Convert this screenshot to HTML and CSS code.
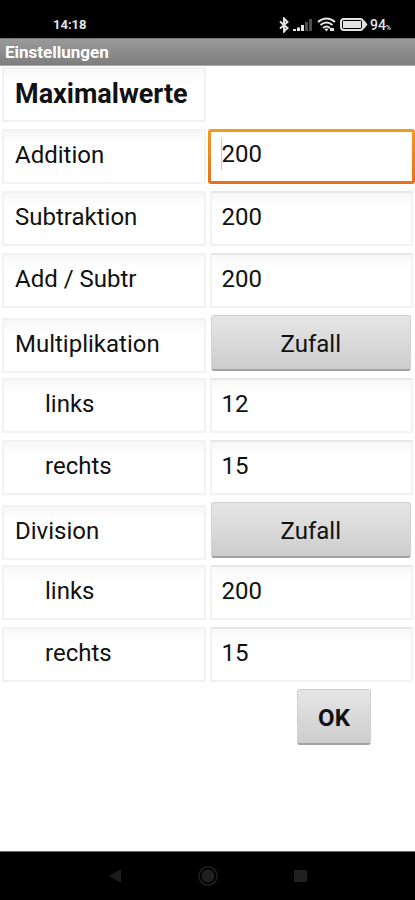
FILE: index.html
```html
<!DOCTYPE html>
<html lang="de">
<head>
  <meta charset="UTF-8" />
  <meta name="viewport" content="width=device-width, initial-scale=1.0" />
  <title>Einstellungen</title>
  <link rel="stylesheet" href="styles.css">
</head>
<body>

  <!-- Status bar -->
  <div class="status-bar">
    <span class="clock">14:18</span>
    <div class="status-icons">
      <svg width="10" height="16" viewBox="0 0 10 16" fill="none" stroke="#e4e4e4" stroke-width="2">
        <path d="M1 4.5 L8.5 11 L5 14.5 V1.5 L8.5 5 L1 11.5" />
      </svg>
      <svg width="20" height="12" viewBox="0 0 20 12">
        <path fill="#e4e4e4" d="M0 10h3v2H0zM4 8.5h3V12H4zM8 6h3v6H8z" />
        <path fill="#4c4c4c" d="M12 3h3v9h-3zM16 0h3v12h-3z" />
      </svg>
      <svg width="19" height="15" viewBox="0 0 19 15" fill="none" stroke="#e4e4e4" stroke-width="2">
        <path d="M1 5 Q9.5 -2 18 5M3.5 8 Q9.5 3 15.5 8M6 11 Q9.5 8 13 11" />
        <path fill="#e4e4e4" stroke="none" d="M7.5 12 Q9.5 11 11.5 12 L9.5 14.5zM13 11h4v3h-4z" />
      </svg>
      <svg width="28" height="14" viewBox="0 0 28 14">
        <rect x="1" y="1" width="22" height="11" rx="3" fill="none" stroke="#e4e4e4" stroke-width="2" />
        <rect x="3" y="3" width="18" height="7" fill="#e4e4e4" />
        <path fill="#e4e4e4" d="M24 2 L27.5 6.5 L24 11z" />
      </svg>
      <span class="battery">94<small>%</small></span>
    </div>
  </div>

  <h1 class="title-bar">Einstellungen</h1>

  <!-- Settings -->
  <form class="settings">
    <div class="row">
      <h2 class="label heading">Maximalwerte</h2>
    </div>
    <div class="row">
      <label class="label" for="addition">Addition</label>
      <input class="field active" id="addition" type="text" inputmode="numeric" value="200">
    </div>
    <div class="row">
      <label class="label" for="subtraktion">Subtraktion</label>
      <input class="field" id="subtraktion" type="text" inputmode="numeric" value="200">
    </div>
    <div class="row">
      <label class="label" for="addsubtr">Add / Subtr</label>
      <input class="field" id="addsubtr" type="text" inputmode="numeric" value="200">
    </div>
    <div class="row mode">
      <label class="label" for="mult">Multiplikation</label>
      <button class="btn" id="mult" type="button">Zufall</button>
    </div>
    <div class="row">
      <label class="label indent" for="mult-links">links</label>
      <input class="field" id="mult-links" type="text" inputmode="numeric" value="12">
    </div>
    <div class="row">
      <label class="label indent" for="mult-rechts">rechts</label>
      <input class="field" id="mult-rechts" type="text" inputmode="numeric" value="15">
    </div>
    <div class="row mode">
      <label class="label" for="div">Division</label>
      <button class="btn" id="div" type="button">Zufall</button>
    </div>
    <div class="row">
      <label class="label indent" for="div-links">links</label>
      <input class="field" id="div-links" type="text" inputmode="numeric" value="200">
    </div>
    <div class="row">
      <label class="label indent" for="div-rechts">rechts</label>
      <input class="field" id="div-rechts" type="text" inputmode="numeric" value="15">
    </div>
    <div class="actions">
      <button class="btn ok" type="button">OK</button>
    </div>
  </form>

  <!-- Android navigation -->
  <nav class="nav-bar">
    <button type="button" aria-label="Zurück">
      <svg width="20" height="20" viewBox="0 0 20 20"><path fill="#1c1c1c" d="M4 10 L16 3 V17z" /></svg>
    </button>
    <button type="button" aria-label="Start">
      <svg width="20" height="20" viewBox="0 0 20 20">
        <circle cx="10" cy="10" r="9" fill="none" stroke="#202020" stroke-width="1.5" />
        <circle cx="10" cy="10" r="6.5" fill="#202020" />
      </svg>
    </button>
    <button type="button" aria-label="Übersicht">
      <svg width="20" height="20" viewBox="0 0 20 20"><rect x="3" y="4" width="13" height="12" fill="#202020" /></svg>
    </button>
  </nav>

</body>
</html>
```
FILE: styles.css
```css
* {
  margin: 0;
  padding: 0;
  box-sizing: border-box;
  font-family: Roboto, sans-serif;
}

body {
  background-color: #fff;
  color: #111;
  min-height: 100vh;
  display: flex;
  flex-direction: column;
}

/* ========== Status bar ========== */
.status-bar {
  display: flex;
  justify-content: space-between;
  align-items: center;
  height: 38px;
  padding: 11px 24px 0 53px;
  background: #000;
  color: #e4e4e4;
  font-weight: bold;
}

.clock {
  font-size: 13px;
}

.status-icons {
  display: flex;
  align-items: center;
  gap: 4px;
}

.battery {
  font-size: 14px;
  font-weight: 500;
  margin-left: -2px;
}

.battery small {
  font-size: 7px;
}

/* ========== Title ========== */
.title-bar {
  height: 28px;
  padding-left: 5px;
  border-top: 1px solid #777;
  border-bottom: 1px solid #aaa;
  background: linear-gradient(#9a9a9a, #7e7e7e);
  color: #fff;
  font-size: 17px;
  font-weight: bold;
  line-height: 27px;
}

/* ========== Settings ========== */
.settings {
  display: flex;
  flex-direction: column;
  gap: 5px;
  padding: 1px 2px 0;
}

.row {
  display: grid;
  grid-template-columns: 1fr 1fr;
  align-items: start;
  gap: 4px;
  min-height: 57px;
}

.label,
.field {
  display: block;
  width: 100%;
  height: 55px;
  padding: 0 10px 4px;
  border: 2px solid #f2f2f2;
  background: linear-gradient(#f7f7f7, #fff 14px);
  color: #111;
  font-size: 24px;
}

.label {
  padding-left: 11px;
  line-height: 49px;
}

.heading {
  font-size: 27px;
  font-weight: bold;
  line-height: 51px;
}

.indent {
  padding-left: 41px;
}

.mode .label {
  margin-top: 3px;
}

.field {
  border-top-color: #e6e7e8;
  outline: none;
}

/* selected field, with its text cursor */
.active {
  width: calc(100% + 4px);
  margin-left: -2px;
  border: 3px solid transparent;
  border-radius: 3px;
  padding: 0 11px 6px;
  background:
    linear-gradient(#ccc, #ccc) 10px 5px / 1px 33px no-repeat padding-box,
    linear-gradient(#fff, #fff) padding-box,
    linear-gradient(#f59a1c, #e8701a) border-box;
}

.btn {
  height: 56px;
  margin: 0 2px 0 1px;
  padding-top: 2px;
  border: 1px solid #d0d0d0;
  border-bottom: 2px solid #a2a2a2;
  border-radius: 3px;
  background: linear-gradient(#e6e6e6, #cdcdcd);
  color: #111;
  font-size: 24px;
}

.actions {
  display: flex;
  justify-content: flex-end;
  padding: 0 40px 0 0;
}

.ok {
  width: 74px;
  font-weight: bold;
}

/* ========== Navigation ========== */
.nav-bar {
  display: flex;
  justify-content: center;
  align-items: center;
  gap: 73px;
  height: 49px;
  margin-top: auto;
  border-top: 1px solid #666;
  background: #000;
}

.nav-bar button {
  display: flex;
  border: none;
  background: none;
}
```
